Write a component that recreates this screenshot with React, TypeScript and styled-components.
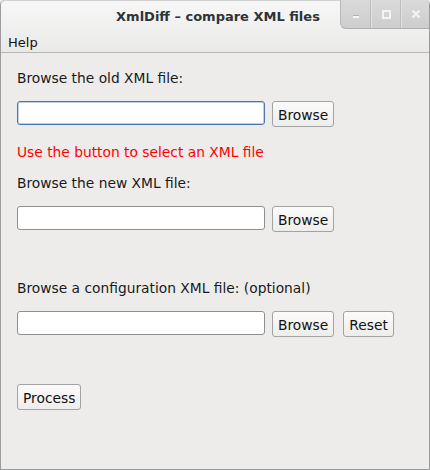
import React from "react";
import styled, { createGlobalStyle } from "styled-components";

const Global = createGlobalStyle`
  html, body { margin: 0; padding: 0; background: #edeceb; }
  body { font-family: "DejaVu Sans", sans-serif; }
`;

const Window = styled.div`
  width: 430px;
  height: 470px;
  box-sizing: border-box;
  border: 1px solid #9b9b9b;
  border-top: none;
  border-radius: 5px 5px 0 0;
  background: #edeceb;
  display: flex;
  flex-direction: column;
  overflow: hidden;
`;

const Header = styled.div`
  position: relative;
  background: linear-gradient(#f7f7f7, #e9e9e8);
  border-bottom: 1px solid #b7b6b5;
  border-top: 1px solid #d0d0d0;
  border-radius: 5px 5px 0 0;
`;

const TitleBar = styled.div`
  height: 32px;
  display: flex;
  align-items: center;
  justify-content: center;
  font-family: "DejaVu Sans", sans-serif;
  font-weight: bold;
  font-size: 13px;
  color: #2e3436;
  padding-left: 6px;
  padding-bottom: 2px;
  box-sizing: border-box;
`;

const WinButtons = styled.div`
  position: absolute;
  top: -1px;
  right: -1px;
  display: flex;
  height: 28px;
  background: linear-gradient(#dadada, #cdcdcd);
  border-left: 1px solid #b8b8b8;
  border-bottom: 1px solid #b0b0b0;
  border-bottom-left-radius: 6px;
`;

const WinButton = styled.div<{ $last?: boolean }>`
  width: 29px;
  height: 28px;
  display: flex;
  align-items: center;
  justify-content: center;
  border-right: ${(p) => (p.$last ? "none" : "1px solid #bdbdbd")};
  box-shadow: ${(p) => (p.$last ? "none" : "1px 0 0 #e2e2e2")};
`;

const MenuBar = styled.div`
  height: 19px;
  display: flex;
  align-items: center;
  padding-left: 7px;
  font-size: 13px;
  color: #111;
`;

const Content = styled.div`
  display: flex;
  flex-direction: column;
  padding: 17px 16px 0 16px;
`;

const Label = styled.div<{ $red?: boolean; $top?: number }>`
  font-size: 13.8px;
  line-height: 17px;
  color: ${(p) => (p.$red ? "#ff0000" : "#1a1a1a")};
  margin-top: ${(p) => p.$top ?? 0}px;
`;

const Row = styled.div<{ $top?: number }>`
  display: flex;
  align-items: flex-start;
  gap: 7px;
  margin-top: ${(p) => p.$top ?? 0}px;
`;

const Entry = styled.input<{ $focus?: boolean }>`
  width: 248px;
  height: 24px;
  box-sizing: border-box;
  border: 1px solid ${(p) => (p.$focus ? "#4a77b0" : "#8f8f8f")};
  border-radius: 3px;
  background: #fff;
  outline: none;
  margin: 0;
  box-shadow: ${(p) => (p.$focus ? "inset 0 0 0 1px #bdd0e8" : "none")};
`;

const Button = styled.button<{ $gap?: number }>`
  height: 26px;
  box-sizing: border-box;
  padding: 2px 5px 0 5px;
  border: 1px solid #a3a3a3;
  border-radius: 3px;
  background: linear-gradient(#fbfbfb, #ededec);
  font-family: "DejaVu Sans", sans-serif;
  font-size: 13.8px;
  color: #111;
  margin-left: ${(p) => p.$gap ?? 0}px;
  line-height: 22px;
`;

const Minimize = () => (
  <svg width="10" height="10" viewBox="0 0 10 10">
    <rect x="2" y="7" width="6" height="2" fill="#f4f4f4" />
    <rect x="2" y="6" width="6" height="1" fill="#b0b0b0" />
  </svg>
);
const Maximize = () => (
  <svg width="10" height="10" viewBox="0 0 10 10">
    <rect x="2" y="2" width="7" height="7" fill="none" stroke="#f4f4f4" strokeWidth="2" />
  </svg>
);
const Close = () => (
  <svg width="10" height="10" viewBox="0 0 10 10">
    <path d="M1.5 1.5 L8.5 8.5 M8.5 1.5 L1.5 8.5" stroke="#f4f4f4" strokeWidth="2" />
  </svg>
);

export default function App() {
  return (
    <>
      <Global />
      <Window>
        <Header>
          <TitleBar>XmlDiff – compare XML files</TitleBar>
          <WinButtons>
            <WinButton><Minimize /></WinButton>
            <WinButton><Maximize /></WinButton>
            <WinButton $last><Close /></WinButton>
          </WinButtons>
          <MenuBar>Help</MenuBar>
        </Header>
        <Content>
          <Label>Browse the old XML file:</Label>
          <Row $top={14}>
            <Entry $focus />
            <Button>Browse</Button>
          </Row>
          <Label $red $top={17}>Use the button to select an XML file</Label>
          <Label $top={14}>Browse the new XML file:</Label>
          <Row $top={14}>
            <Entry />
            <Button>Browse</Button>
          </Row>
          <Label $top={48}>Browse a configuration XML file: (optional)</Label>
          <Row $top={14}>
            <Entry />
            <Button>Browse</Button>
            <Button $gap={2}>Reset</Button>
          </Row>
          <Row $top={47}>
            <Button>Process</Button>
          </Row>
        </Content>
      </Window>
    </>
  );
}
